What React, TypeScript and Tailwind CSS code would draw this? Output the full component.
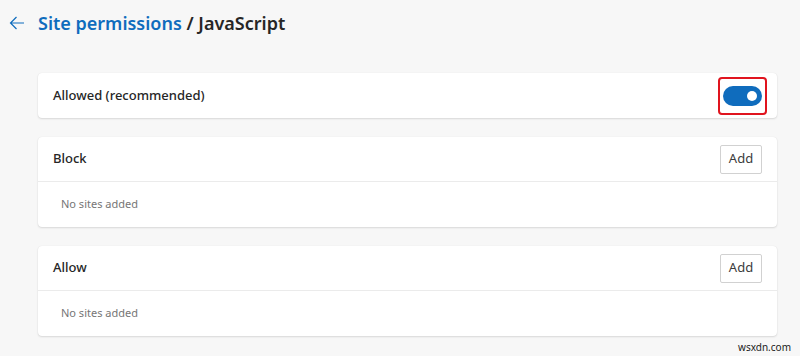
import React from "react";

const font = { fontFamily: '"Noto Sans", "Open Sans", sans-serif' };

function Toggle() {
  // outlined in red in the screenshot
  return (
    <div className="rounded-[4px] border-2 border-[#e0141e] px-[3px] py-[7px]">
      <div className="flex h-[20px] w-[39px] items-center justify-end rounded-full bg-[#0f6cbd] pr-[5px]">
        <div className="h-[10px] w-[10px] rounded-full bg-white" />
      </div>
    </div>
  );
}

function SiteList({ title }: { title: string }) {
  return (
    <div className="rounded-[4px] bg-white shadow-[0_1px_2px_rgba(0,0,0,0.12),0_0_1px_rgba(0,0,0,0.1)]">
      <div className="flex h-[45px] items-center justify-between border-b border-[#ebebeb] pl-[15px] pr-[15px]">
        <span className="text-[13px] font-medium text-[#262626]">{title}</span>
        <button className="h-[29px] w-[42px] rounded-[2px] border border-[#d1d1d1] bg-white text-[13px] text-[#3b3b3b]">
          Add
        </button>
      </div>
      <div className="flex h-[45px] items-center pl-[23px] text-[11px] text-[#767676]">
        No sites added
      </div>
    </div>
  );
}

export default function App() {
  return (
    <div className="relative h-[356px] w-[800px] overflow-hidden bg-[#f7f7f7]" style={font}>
      <div className="flex h-[46px] items-center pl-[9px]">
        <svg width="16" height="14" viewBox="0 0 16 14" className="mr-[13px]">
          <path d="M15 7H1.5M7.5 1L1.5 7l6 6" fill="none" stroke="#0f6cbd" strokeWidth="1.2" />
        </svg>
        <h1 className="text-[18px] font-semibold text-[#262626]">
          <span className="text-[#0f6cbd]">Site permissions</span> / JavaScript
        </h1>
      </div>

      <div className="flex flex-col gap-[19px] pl-[38px] pr-[23px] pt-[27px]">
        <div className="flex h-[45px] items-center justify-between rounded-[4px] bg-white pl-[15px] pr-[10px] shadow-[0_1px_2px_rgba(0,0,0,0.12),0_0_1px_rgba(0,0,0,0.1)]">
          <span className="text-[13px] font-medium text-[#262626]">Allowed (recommended)</span>
          <Toggle />
        </div>
        <SiteList title="Block" />
        <SiteList title="Allow" />
      </div>

      <div className="absolute bottom-[1px] right-[9px] text-[10px] text-[#222]">wsxdn.com</div>
    </div>
  );
}
